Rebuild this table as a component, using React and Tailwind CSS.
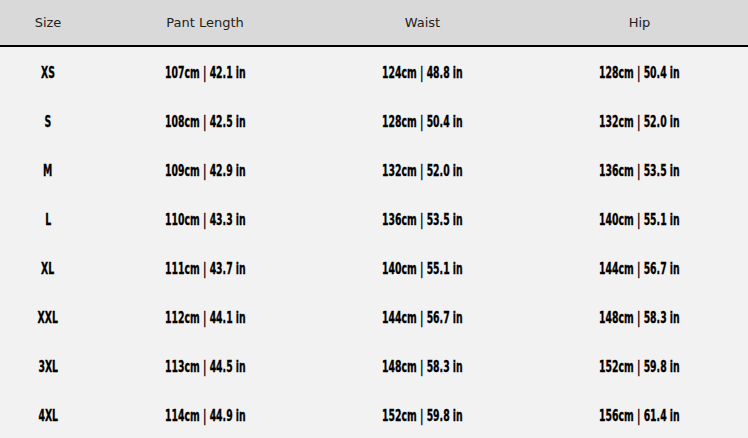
import React from 'react'

const ROWS = [
  ['XS', '107cm | 42.1 in', '124cm | 48.8 in', '128cm | 50.4 in'],
  ['S', '108cm | 42.5 in', '128cm | 50.4 in', '132cm | 52.0 in'],
  ['M', '109cm | 42.9 in', '132cm | 52.0 in', '136cm | 53.5 in'],
  ['L', '110cm | 43.3 in', '136cm | 53.5 in', '140cm | 55.1 in'],
  ['XL', '111cm | 43.7 in', '140cm | 55.1 in', '144cm | 56.7 in'],
  ['XXL', '112cm | 44.1 in', '144cm | 56.7 in', '148cm | 58.3 in'],
  ['3XL', '113cm | 44.5 in', '148cm | 58.3 in', '152cm | 59.8 in'],
  ['4XL', '114cm | 44.9 in', '152cm | 59.8 in', '156cm | 61.4 in']
]

const HEAD = ['Size', 'Pant Length', 'Waist', 'Hip']
const cols = 'grid grid-cols-[96px_218px_217px_217px]'

export default function App() {
  return (
    <div className="w-[748px] h-[438px] overflow-hidden bg-[#f2f2f2]">
      <div className={`${cols} h-[47px] bg-[#d9d9d9] border-b-2 border-black items-center text-[13px] text-[#222] font-['DejaVu_Sans',sans-serif]`}>
        {HEAD.map(h => <div key={h} className="text-center">{h}</div>)}
      </div>
      <div className="pt-[2px]">
        {ROWS.map(r => (
          <div key={r[0]} className={`${cols} h-[49px] items-center text-[15px] font-bold text-black font-['DejaVu_Sans_Condensed',sans-serif]`}>
            {r.map((c, i) => (
              <div key={i} className="text-center">
                <span className="inline-block scale-x-[0.69] whitespace-nowrap [-webkit-text-stroke:0.3px_black]">{c}</span>
              </div>
            ))}
          </div>
        ))}
      </div>
    </div>
  )
}
